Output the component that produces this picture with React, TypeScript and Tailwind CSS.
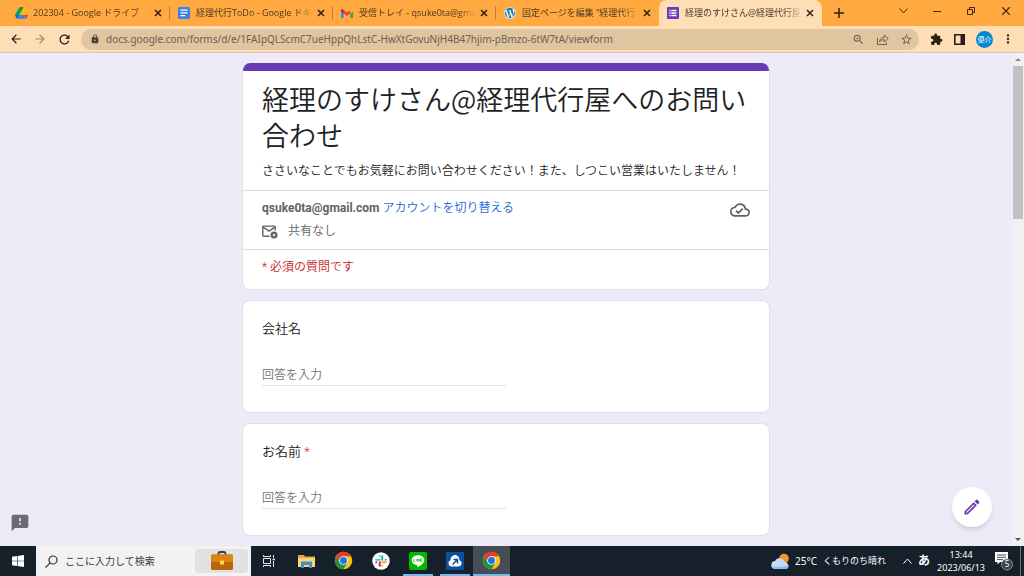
import { useState } from "react";
import type { ReactNode } from "react";
import {
  MdArrowBack,
  MdArrowForward,
  MdExtension,
  MdFeedback,
  MdLock,
  MdMoreVert,
  MdOutlineCloudDone,
  MdOutlineEdit,
  MdRefresh,
  MdStarBorder,
  MdZoomIn,
} from "react-icons/md";
import { FaWordpress } from "react-icons/fa";

function DriveIcon() {
  return (
    <svg width="13" height="12" viewBox="0 0 87 78">
      <path d="M6.6 66.9 10.4 73.4c.8 1.4 2 2.5 3.3 3.3L27.5 53H0c0 1.6.4 3.1 1.2 4.5z" fill="#0066da" />
      <path d="M43.6 25 29.9 1.2c-1.3.8-2.5 1.9-3.3 3.3L1.2 48.5A9 9 0 0 0 0 53h27.5z" fill="#00ac47" />
      <path d="M43.6 25 57.4 1.2C56 .4 54.5 0 52.9 0H34.4c-1.6 0-3.2.4-4.5 1.2z" fill="#00832d" />
      <path d="M59.8 53H27.5L13.7 76.8c1.4.8 2.9 1.2 4.5 1.2h50.9c1.6 0 3.1-.4 4.5-1.2z" fill="#2684fc" />
      <path d="M73.4 26.5 60.7 4.5c-.8-1.4-2-2.5-3.3-3.3L43.6 25l16.2 28h27.5c0-1.500-.4-3.1-1.2-4.5z" fill="#ffba00" />
      <path d="M73.6 76.8c1.3-.8 2.5-1.9 3.3-3.3l9.2-16c.8-1.4 1.2-2.9 1.2-4.5H59.8z" fill="#ea4335" />
    </svg>
  );
}

function DocsIcon() {
  return (
    <svg width="12" height="12" viewBox="0 0 12 12">
      <rect width="12" height="12" rx="1.5" fill="#3f7fe8" />
      <path d="M2.5 3.2h7M2.5 5.9h7M2.5 8.6h4.6" stroke="#fff" strokeWidth="1.3" />
    </svg>
  );
}

function GmailIcon() {
  return (
    <svg width="12" height="9" viewBox="0 0 48 36">
      <path d="M0 6v27a3 3 0 0 0 3 3h8V16z" fill="#4285f4" />
      <path d="M48 6v27a3 3 0 0 1-3 3h-8V16z" fill="#34a853" />
      <path d="M11 4v14l13 10 13-10V4L24 14z" fill="#ea4335" />
      <path d="M0 5v5l11 8V4L8 1.8C4.7-.7 0 1 0 5z" fill="#c5221f" />
      <path d="M48 5v5l-11 8V4l3-2.2C43.3-.7 48 1 48 5z" fill="#fbbc04" />
    </svg>
  );
}

function FormsIcon() {
  return (
    <svg width="12" height="12" viewBox="0 0 12 12">
      <rect width="12" height="12" rx="1" fill="#673ab7" />
      <path d="M4.3 3.5h5.2M4.3 6h5.2M4.3 8.5h5.2" stroke="#fff" strokeWidth="1.3" />
      <path d="M2.3 3.5h1.2M2.3 6h1.2M2.3 8.5h1.2" stroke="#fff" strokeWidth="1.3" />
    </svg>
  );
}

function CloseIcon({ size = 8 }: { size?: number }) {
  return (
    <svg width={size} height={size} viewBox="0 0 8 8" stroke="currentColor" strokeWidth={size > 8 ? 0.9 : 1.5}>
      <path d="M1 1l6 6M7 1l-6 6" />
    </svg>
  );
}

function ShareIcon() {
  return (
    <svg width="13" height="13" viewBox="0 0 13 13" fill="none" stroke="currentColor" strokeWidth="1">
      <path d="M1.500 5v6.500h9V9.500" />
      <path d="M3.500 9c.3-3 2-4.500 4.700-4.600V2l4 3.500-4 3.500V6.700C6 6.700 4.700 7.300 3.500 9z" />
    </svg>
  );
}

function MailOffIcon() {
  return (
    <svg width="16" height="14" viewBox="0 0 16 14" fill="none" stroke="#5f6368" strokeWidth="1.4">
      <path d="M7.5 11.3H1.700a.9.9 0 0 1-.9-.9V2a.9.9 0 0 1 .9-.9h10.600a.9.9 0 0 1 .9.9v3.500" />
      <path d="M1 2.200l6 4 6-4" />
      <circle cx="12" cy="10" r="3.5" fill="#5f6368" stroke="none" />
      <path d="M10.800 8.800l2.400 2.400M13.200 8.800l-2.400 2.400" stroke="#fff" strokeWidth="0.9" />
    </svg>
  );
}

function ChromeIcon() {
  return (
    <svg width="19" height="19" viewBox="0 0 48 48">
      <circle cx="24" cy="24" r="22" fill="#fbc116" />
      <path d="M24 13H43.1A22 22 0 0 0 4.9 13L14.5 29.5 24 24z" fill="#e33b2e" />
      <path d="M4.9 13A22 22 0 0 0 24 46l9.5-16.5L24 24l-9.5 5.5z" fill="#229342" />
      <circle cx="24" cy="24" r="11" fill="#fff" />
      <circle cx="24" cy="24" r="8.7" fill="#1a73e8" />
    </svg>
  );
}

function SlackIcon() {
  return (
    <svg width="18" height="18" viewBox="0 0 36 36" strokeWidth="4" strokeLinecap="round">
      <circle cx="18" cy="18" r="17.5" fill="#fff" />
      <path d="M15.500 8.500v.1M8.500 15.500h7" stroke="#36c5f0" />
      <path d="M20.500 8.500v7M27.500 15.500h-.1" stroke="#2eb67d" />
      <path d="M27.500 20.500h-7M20.500 27.500v-.1" stroke="#ecb22e" />
      <path d="M15.500 27.500v-7M8.500 20.500h.1" stroke="#e01e5a" />
    </svg>
  );
}

function LineIcon() {
  return (
    <svg width="18" height="18" viewBox="0 0 18 18">
      <rect width="18" height="18" rx="2" fill="#00b900" />
      <path d="M9 3.200c-3.600 0-6.300 2.200-6.300 5 0 2.500 2.200 4.500 5.200 4.900.6.100.5.600.4 1.600 0 .4.200.6.600.3 2.600-1.500 6.400-3.800 6.400-6.800 0-2.800-2.700-5-6.300-5z" fill="#fff" />
      <path d="M4.700 6.800v2.700h1.200M7.200 6.800v2.700M8.600 9.500V6.800l1.700 2.700V6.800M13 6.800h-1.300v2.700H13M11.700 8.100H13" fill="none" stroke="#00b900" strokeWidth="0.7" />
    </svg>
  );
}

function CloudLinkIcon() {
  return (
    <svg width="18" height="18" viewBox="0 0 18 18">
      <rect width="18" height="18" fill="#0d4f9e" />
      <path d="M5.300 14.500a3.300 3.300 0 0 1-.9-6.300C4.700 5.400 6.400 3 9 3s4.300 2.400 4.600 5.200a3.300 3.300 0 0 1-.9 6.300z" fill="#fff" />
      <path d="M6.500 12.500l4.500-4.500M7.500 7.500h4v4" fill="none" stroke="#0d4f9e" strokeWidth="1.5" />
    </svg>
  );
}

function ExplorerIcon() {
  return (
    <svg width="17" height="14" viewBox="0 0 17 14">
      <path d="M0 1h6l1 1.500h10V13H0z" fill="#e5a93b" />
      <path d="M0 4h17v9H0z" fill="#fcd573" />
      <path d="M3 14V7.500h11V14h-3v-3H6v3z" fill="#3f8fd2" />
    </svg>
  );
}

function TaskViewIcon() {
  return (
    <svg width="13" height="12" viewBox="0 0 13 12" fill="none" stroke="#e8eaed" strokeWidth="1">
      <path d="M.5 0v1.500h7V0M.5 12v-1.500h7V12M.5 3.500h7v5h-7zM10.500 0v3M10.500 6v6" />
      <path d="M9.500 4.500h2.500" strokeWidth="1.500" />
    </svg>
  );
}

function BriefcaseIcon() {
  return (
    <svg width="24" height="20" viewBox="0 0 24 20">
      <path d="M8.500 4V2.500a1.500 1.500 0 0 1 1.500-1.500h4a1.500 1.500 0 0 1 1.500 1.500V4" fill="none" stroke="#3d3d3d" strokeWidth="1.8" />
      <rect x="1" y="3.5" width="22" height="15.5" rx="1.5" fill="#b9650c" />
      <path d="M1 5a1.500 1.500 0 0 1 1.500-1.500h19A1.500 1.500 0 0 1 23 5v6H1z" fill="#dd8410" />
      <rect x="10" y="9.5" width="4" height="4" rx=".5" fill="#ffd84a" />
    </svg>
  );
}

function WeatherIcon() {
  return (
    <svg width="19" height="17" viewBox="0 0 19 17">
      <circle cx="13" cy="5.5" r="4.8" fill="#f39a2c" />
      <path d="M4.500 16a4 4 0 0 1-.4-8A5 5 0 0 1 13.500 9a3.600 3.600 0 0 1 1.200 7z" fill="#c3dafa" />
      <path d="M4.500 16a4 4 0 0 1-3.700-2.500c4 .8 12 .8 16.900-1.500A3.600 3.600 0 0 1 14.700 16z" fill="#93b9ee" />
    </svg>
  );
}

const tabs: { title: string; icon: ReactNode }[] = [
  { title: "202304 - Google ドライブ", icon: <DriveIcon /> },
  { title: "経理代行ToDo - Google ドキ", icon: <DocsIcon /> },
  { title: "受信トレイ - qsuke0ta@gmai", icon: <GmailIcon /> },
  { title: "固定ページを編集 “経理代行", icon: <FaWordpress size={12} color="#21759b" className="rounded-full bg-white" /> },
  { title: "経理のすけさん@経理代行屋へ", icon: <FormsIcon /> },
];

const taskbarApps: { name: string; icon: ReactNode; open?: boolean; active?: boolean }[] = [
  { name: "タスク ビュー", icon: <TaskViewIcon /> },
  { name: "エクスプローラー", icon: <ExplorerIcon /> },
  { name: "Chrome", icon: <ChromeIcon /> },
  { name: "Slack", icon: <SlackIcon /> },
  { name: "LINE", icon: <LineIcon />, open: true },
  { name: "クラウド", icon: <CloudLinkIcon />, open: true },
  { name: "Chrome ウィンドウ", icon: <ChromeIcon />, active: true },
];

function TabStrip() {
  return (
    <div className="flex h-[26px] shrink-0 items-stretch bg-[#ffa940] pl-[7px] text-[#4a3a24]">
      {tabs.map((tab, i) => {
        const active = i === tabs.length - 1;
        return (
          <div
            key={tab.title}
            className={`flex w-[163px] min-w-0 items-center pl-[7px] ${active ? "rounded-t-lg bg-[#ffddb5]" : ""}`}
          >
            <span className="flex w-[14px] shrink-0 justify-center">{tab.icon}</span>
            <span className="ml-[5px] min-w-0 flex-1 whitespace-nowrap font-['Open_Sans','Noto_Sans_CJK_JP',sans-serif] text-[9px] leading-4 [mask-image:linear-gradient(to_right,black_85%,transparent)]">
              {tab.title}
            </span>
            <button aria-label="タブを閉じる" className="mr-[3px] p-1 text-[#2a2015]">
              <CloseIcon />
            </button>
            <span className={`h-[14px] w-px ${i < 3 ? "bg-[#b98044]" : ""}`} />
          </div>
        );
      })}
      <button aria-label="新しいタブ" className="px-3 text-[#2a2015]">
        <svg width="10" height="10" viewBox="0 0 10 10" stroke="currentColor" strokeWidth="1.5">
          <path d="M5 0v10M0 5h10" />
        </svg>
      </button>
      <div className="ml-auto flex items-center pb-1 text-[#3c2a12]">
        <button aria-label="タブを検索" className="flex w-[34px] justify-center">
          <svg width="9" height="6" viewBox="0 0 9 6" fill="none" stroke="currentColor">
            <path d="M.5.500l4 4.500 4-4.500" />
          </svg>
        </button>
        <button aria-label="最小化" className="flex w-[34px] justify-center">
          <svg width="8" height="8" viewBox="0 0 8 8" stroke="currentColor">
            <path d="M0 4.500h8" />
          </svg>
        </button>
        <button aria-label="元に戻す" className="flex w-[34px] justify-center">
          <svg width="8" height="8" viewBox="0 0 8 8" fill="none" stroke="currentColor">
            <path d="M.5 2.500h5v5h-5zM2.500 2.500v-2h5v5h-2" />
          </svg>
        </button>
        <button aria-label="閉じる" className="flex w-[36px] justify-center">
          <CloseIcon size={10} />
        </button>
      </div>
    </div>
  );
}

function Toolbar() {
  return (
    <div className="flex h-[27px] shrink-0 items-center border-b border-[#dcc8b8] bg-[#ffddb5] text-[#2a2015]">
      <div className="flex w-[81px] shrink-0 items-center gap-[10px] pl-[9px]">
        <button aria-label="戻る"><MdArrowBack size={14} /></button>
        <button aria-label="進む" className="text-[#a28b70]"><MdArrowForward size={14} /></button>
        <button aria-label="再読み込み"><MdRefresh size={15} /></button>
      </div>
      <div className="flex h-[21px] min-w-0 flex-1 items-center rounded-full bg-[#dfc5a0] pr-[6px] pl-[9px] text-[#6f6150]">
        <MdLock size={10} className="shrink-0 text-[#4a4036]" />
        <input
          aria-label="アドレス"
          readOnly
          value="docs.google.com/forms/d/e/1FAIpQLScmC7ueHppQhLstC-HwXtGovuNjH4B47hjim-pBmzo-6tW7tA/viewform"
          className="ml-[6px] min-w-0 flex-1 bg-transparent text-[10px] outline-none"
        />
        <div className="flex items-center gap-[11px]">
          <button aria-label="ズーム"><MdZoomIn size={13} /></button>
          <button aria-label="共有"><ShareIcon /></button>
          <button aria-label="ブックマーク"><MdStarBorder size={13} /></button>
        </div>
      </div>
      <div className="flex shrink-0 items-center gap-[11px] pr-[9px] pl-[11px]">
        <button aria-label="拡張機能"><MdExtension size={13} /></button>
        <button aria-label="サイドパネル">
          <svg width="11" height="11" viewBox="0 0 11 11">
            <path d="M.8.800h9.400v9.400H.8z" fill="none" stroke="currentColor" strokeWidth="1.6" />
            <path d="M6.500 1h4v9h-4z" fill="currentColor" />
          </svg>
        </button>
        <div className="flex items-center gap-2">
          <button aria-label="プロフィール" className="flex size-[17px] items-center justify-center rounded-full bg-[#0288d1] text-[7px] leading-none text-white">
            優介
          </button>
          <button aria-label="メニュー"><MdMoreVert size={14} /></button>
        </div>
      </div>
    </div>
  );
}

function Question({ id, label, required }: { id: string; label: string; required?: boolean }) {
  const [answer, setAnswer] = useState("");
  return (
    <div className="mt-[10px] rounded-lg border border-[#e0dfe8] bg-white px-[19px] pt-[18px] pb-[26px]">
      <label htmlFor={id} className="block text-[13px] leading-5 text-[#202124]">
        {label}
        {required && <span className="text-[#d93025]"> *</span>}
      </label>
      <input
        id={id}
        value={answer}
        onChange={(e) => setAnswer(e.target.value)}
        placeholder="回答を入力"
        className="mt-[25px] block h-[22px] w-1/2 border-b border-[#e0e0e0] text-[12px] outline-none placeholder:text-[#70757a]"
      />
    </div>
  );
}

function FormPage() {
  return (
    <main className="relative min-h-0 flex-1 overflow-hidden bg-[#eeeaf7] font-[Roboto,'Noto_Sans_CJK_JP',sans-serif] font-[350]">
      <div className="flex h-full">
        <div className="min-w-0 flex-1 pt-[10px]">
          <form className="mx-auto w-full max-w-[528px]">
            <div className="overflow-hidden rounded-lg border border-t-0 border-[#e0dfe8] bg-white">
              <div className="h-2 bg-[#673ab7]" />
              <div className="px-[19px] py-[10px]">
                <h1 className="font-['Noto_Sans_CJK_JP',sans-serif] text-[27px] leading-9 font-[350] text-[#202124]">
                  経理のすけさん@経理代行屋へのお問い合わせ
                </h1>
                <p className="mt-[9px] text-[12px] leading-[18px] whitespace-nowrap text-[#202124]">
                  ささいなことでもお気軽にお問い合わせください！また、しつこい営業はいたしません！
                </p>
              </div>
              <div className="flex items-start justify-between border-y border-[#dadce0] px-[19px] py-[6px] text-[12px] leading-[23px] text-[#5f6368]">
                <div>
                  <p>
                    <b>qsuke0ta@gmail.com</b>{" "}
                    <a href="#switch" className="text-[#1967d2]">アカウントを切り替える</a>
                  </p>
                  <p className="flex items-center gap-[10px]">
                    <MailOffIcon />
                    共有なし
                  </p>
                </div>
                <MdOutlineCloudDone size={20} className="mt-[3px]" />
              </div>
              <p className="px-[19px] pt-2 pb-[13px] text-[12px] leading-[18px] text-[#c5221f]">* 必須の質問です</p>
            </div>
            <Question id="company" label="会社名" />
            <Question id="name" label="お名前" required />
          </form>
        </div>
        <div className="flex w-3 shrink-0 flex-col items-center justify-between bg-[#f1f1f1]">
          <div className="flex flex-col items-center">
            <svg width="6" height="13" viewBox="0 0 6 13"><path d="M0 8l3-3 3 3z" fill="#8b8b8b" /></svg>
            <div className="h-[153px] w-[10px] bg-[#c1c1c1]" />
          </div>
          <svg width="6" height="13" viewBox="0 0 6 13"><path d="M0 5l3 3 3-3z" fill="#505050" /></svg>
        </div>
      </div>
      <button aria-label="問題を報告" className="absolute bottom-[13px] left-[10px] text-[#6e6a73]">
        <MdFeedback size={20} />
      </button>
      <button
        aria-label="フォームを編集"
        className="absolute right-8 bottom-[19px] flex size-10 items-center justify-center rounded-full bg-white text-[#673ab7] shadow-md"
      >
        <MdOutlineEdit size={20} />
      </button>
    </main>
  );
}

function Taskbar() {
  return (
    <footer className="flex h-[30px] shrink-0 items-stretch bg-[#15202b] text-white">
      <button aria-label="スタート" className="flex w-9 items-center justify-center">
        <svg width="12" height="12" viewBox="0 0 12 12" fill="#fff">
          <path d="M0 1.700l5-.7v4.700H0zM5.600.900L12 0v5.700H5.600zM0 6.300h5V11l-5-.7zM5.600 6.300H12V12l-6.400-.9z" />
        </svg>
      </button>
      <div className="flex w-[215px] items-center bg-[#f2f2f2] pr-[3px] pl-[9px] text-[#3a3a3a]">
        <svg width="13" height="13" viewBox="0 0 13 13" fill="none" stroke="#333" strokeWidth="1.2">
          <circle cx="8" cy="5" r="4" />
          <path d="M5.200 7.800L.5 12.500" />
        </svg>
        <input
          aria-label="検索"
          placeholder="ここに入力して検索"
          className="ml-[7px] min-w-0 flex-1 bg-transparent text-[10px] outline-none placeholder:text-[#3a3a3a]"
        />
        <span className="flex h-6 w-[53px] items-center justify-center rounded bg-[#e2e2e2]">
          <BriefcaseIcon />
        </span>
      </div>
      {taskbarApps.map((app) => (
        <button
          key={app.name}
          aria-label={app.name}
          className={`flex w-[37px] flex-col items-center ${app.active ? "bg-[#474d55]" : ""}`}
        >
          <span className="flex flex-1 items-center pt-px">{app.icon}</span>
          <span className={`h-[2px] ${app.active ? "w-full bg-[#76b9ed]" : app.open ? "w-[30px] bg-[#76b9ed]" : ""}`} />
        </button>
      ))}
      <div className="ml-auto flex items-center text-[10px]">
        <WeatherIcon />
        <span className="ml-[5px]">25°C</span>
        <span className="ml-[6px] text-[9px] whitespace-nowrap">くもりのち晴れ</span>
        <svg width="9" height="6" viewBox="0 0 9 6" fill="none" stroke="#fff" className="ml-[17px]">
          <path d="M.5 5.500l4-4.500 4 4.500" />
        </svg>
        <span className="ml-[6px] text-[12px] font-bold">あ</span>
        <div className="ml-[7px] text-center text-[9px] leading-[13px]">
          <div>13:44</div>
          <div>2023/06/13</div>
        </div>
        <button aria-label="通知" className="ml-[9px]">
          <svg width="20" height="20" viewBox="0 0 20 20">
            <path d="M1 1h13v10H6l-2.500 2.500V11H1z" fill="#fff" />
            <path d="M3 4h9M3 6.300h9M3 8.600h6" stroke="#15202b" strokeWidth=".8" />
            <circle cx="13" cy="13.5" r="5.5" fill="#3a4149" stroke="#a0a5aa" strokeWidth=".8" />
            <text x="13" y="16.300" fontSize="8" fill="#fff" textAnchor="middle">5</text>
          </svg>
        </button>
        <span className="mr-[3px] ml-[6px] h-full w-px bg-[#6a7178]" />
      </div>
    </footer>
  );
}

export default function App() {
  return (
    <div className="flex h-screen flex-col overflow-hidden font-['Noto_Sans','Noto_Sans_CJK_JP',sans-serif]">
      <TabStrip />
      <Toolbar />
      <FormPage />
      <Taskbar />
    </div>
  );
}
